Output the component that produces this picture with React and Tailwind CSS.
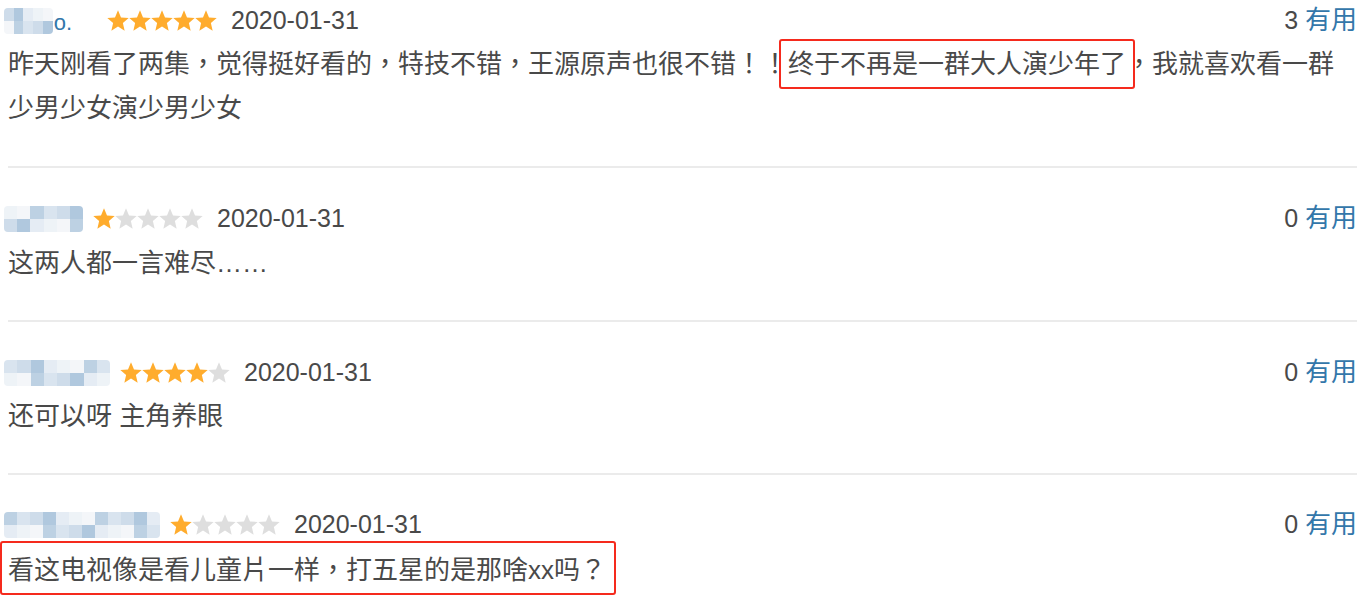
const font = { fontFamily: '"Liberation Sans", "Noto Sans CJK TC", "Noto Sans CJK SC", sans-serif' };

const palette = ["#e3ebf3", "#c9d9e8", "#b6cde1", "#edf2f7", "#a8c3db", "#d5e2ee", "#f3f6f9"];

function Blur({ width, seed, tail }) {
  const cols = Math.ceil(width / 14);
  const cells = [];
  for (let r = 0; r < 2; r++) {
    for (let c = 0; c < cols; c++) {
      cells.push(palette[(c * 3 + r * 5 + seed) % palette.length]);
    }
  }
  return (
    <div className="relative flex h-[28px] items-end" style={{ width }}>
      <div
        className="grid h-[26px] overflow-hidden rounded-[4px] opacity-90"
        style={{ width: width - (tail ? 10 : 0), gridTemplateColumns: `repeat(${cols}, 1fr)` }}
      >
        {cells.map((c, i) => (
          <div key={i} style={{ background: c }} />
        ))}
      </div>
      {tail && <span className="ml-[1px] text-[22px] leading-none text-[#37a]">{tail}</span>}
    </div>
  );
}

function Star({ on }) {
  return (
    <svg viewBox="1.4 1.2 21.2 20.2" className="h-[21px] w-[22px]">
      <polygon
        points="12,1.5 14.9,8.3 22.3,8.9 16.7,13.8 18.4,21.1 12,17.2 5.6,21.1 7.3,13.8 1.7,8.9 9.1,8.3"
        fill={on ? "#ffac2d" : "#dedede"}
      />
    </svg>
  );
}

function Stars({ n }) {
  return (
    <div className="flex">
      {[0, 1, 2, 3, 4].map((i) => (
        <Star key={i} on={i < n} />
      ))}
    </div>
  );
}

function Mark({ children, box }) {
  return (
    <span className="relative">
      {children}
      <span className={`pointer-events-none absolute rounded-[3px] border-2 border-[#f52a1d] ${box}`} />
    </span>
  );
}

const items = [
  {
    user: 93,
    tail: "o.",
    seed: 1,
    stars: 5,
    votes: 3,
    pad: "pt-0 pb-[36px]",
    gap: "mt-[2px]",
    text: (
      <>
        昨天刚看了两集，觉得挺好看的，特技不错，王源原声也很不错！！
        <Mark box="-left-[9px] -right-[9px] -top-[10px] -bottom-[10px]">终于不再是一群大人演少年了</Mark>
        ，我就喜欢看一群少男少女演少男少女
      </>
    ),
  },
  { user: 79, seed: 3, stars: 1, votes: 0, pad: "pt-[30px] pb-[35px]", gap: "mt-[3px]", text: "这两人都一言难尽……" },
  { user: 106, seed: 5, stars: 4, votes: 0, pad: "pt-[30px] pb-[35px]", gap: "mt-[2px]", text: "还可以呀 主角养眼" },
  {
    user: 156,
    seed: 2,
    stars: 1,
    votes: 0,
    pad: "pt-[29px]",
    gap: "mt-[4px]",
    text: (
      <Mark box="-left-[8px] -right-[10px] -top-[14px] -bottom-[10px]">看这电视像是看儿童片一样，打五星的是那啥xx吗？</Mark>
    ),
  },
];

export default function App() {
  return (
    <div className="h-[599px] w-[1372px] overflow-hidden bg-white pl-2 pr-[15px] text-[26px] text-[#494949]" style={font}>
      {items.map((it, i) => (
        <div
          key={i}
          className={`${it.pad} ${i < items.length - 1 ? "border-b-2 border-[#ebebeb]" : ""}`}
        >
          <div className="flex h-10 items-center justify-between">
            <div className="flex items-center">
              <div style={{ width: it.user }} className="-ml-1 flex">
                <Blur width={it.tail ? 68 : it.user} seed={it.seed} tail={it.tail} />
              </div>
              <div className="ml-[10px]">
                <Stars n={it.stars} />
              </div>
              <span className="ml-[14px] text-[25px] leading-none">2020-01-31</span>
            </div>
            <div className="text-[25px] leading-none">
              {it.votes} <span className="text-[26px] text-[#37a]">有用</span>
            </div>
          </div>
          <div className={`${it.gap} leading-[44px]`}>{it.text}</div>
        </div>
      ))}
    </div>
  );
}
